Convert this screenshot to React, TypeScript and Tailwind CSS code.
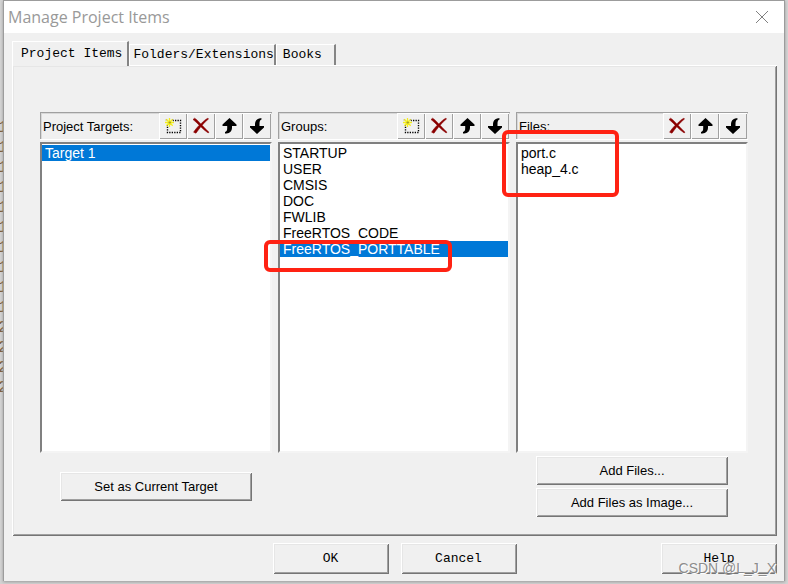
import { useState } from "react";
import type { ReactNode } from "react";
import clsx from "clsx";

const RAISED =
  "bg-[#f0f0f0] shadow-[inset_1px_1px_0_#fff,inset_-1px_-1px_0_#757575,inset_2px_2px_0_#e6e6e6,inset_-2px_-2px_0_#a0a0a0]";

const LINE_NUMBERS = ["1", "1", "1", "1", "1", "1", "1", "1", "1", "1", "2", "2", "2", "2"];

const TABS = [
  { name: "Project Items", pad: "pr-[5px]" },
  { name: "Folders/Extensions", pad: "pl-[3px]" },
  { name: "Books", pad: "pr-3 pl-1.5" },
];

const NewIcon = () => (
  <svg width="18" height="18" viewBox="0 0 18 18" fill="none" aria-hidden="true">
    <rect x="3.5" y="3.5" width="13" height="12" stroke="#000" strokeWidth="1.4" strokeDasharray="1.3 1.2" />
    <path d="M1 1h8v8H1z" fill="#f0f0f0" />
    <path d="M5.5 1v9M1 5.5h9M2.3 2.3l6.4 6.4M8.7 2.3L2.3 8.7" stroke="#f4ee1c" strokeWidth="1.3" />
    <path d="M5 5h1.4v1H5zM1.5 3h1M8 3h1M3 8.5h1" stroke="#8f8b3a" strokeWidth="0.8" />
  </svg>
);

const DeleteIcon = () => (
  <svg width="18" height="18" viewBox="0 0 18 18" aria-hidden="true">
    <path
      d="M1 2.5L2.6 1.2C4.4 2 6.6 4.6 8.8 6.9C11 4.6 13.4 2.4 15.8 1.2L16.6 2C14.6 3.5 12.2 5.9 10.2 8.3C12.3 10.7 14.5 13 17 15.2L16.2 16C13.4 14.2 11 12 8.8 9.8C7.1 12 5.4 14.2 4 16.2L1.6 15.2C2.9 13 5 10.5 7.2 8.2C5.2 6.2 3 4 1 2.5Z"
      fill="#8b0000"
      stroke="#8b0000"
      strokeWidth="0.5"
    />
  </svg>
);

const UpIcon = () => (
  <svg width="18" height="18" viewBox="0 0 18 18" aria-hidden="true">
    <path d="M9.5 1L16.5 7.5V9H12V11C12 14 10 16.2 6.5 16.6H5V15C6.6 14.6 7.2 13.6 7.2 11V9H2.5V7.5Z" fill="#000" />
  </svg>
);

const DownIcon = () => (
  <svg width="18" height="18" viewBox="0 0 18 18" aria-hidden="true">
    <path d="M9 17L16 10.5V9H11.5V7C11.5 4.6 12 3.2 13.5 2.6V1.2H12C8.6 1.6 7 4 7 7V9H2V10.5Z" fill="#000" />
  </svg>
);

const ICONS: Record<string, ReactNode> = {
  New: <NewIcon />,
  Delete: <DeleteIcon />,
  "Move Up": <UpIcon />,
  "Move Down": <DownIcon />,
};

interface ListPaneProps {
  id: string;
  label: string;
  tools: string[];
  items: string[];
  selected?: string[];
  mark?: ReactNode;
  children?: ReactNode;
}

const ListPane = ({ id, label, tools, items, selected = [], mark, children }: ListPaneProps) => {
  const [value, setValue] = useState(selected);

  return (
    <div className="relative flex min-w-0 flex-col">
      <div className="flex h-[27px] items-stretch border-t border-l border-[#a0a0a0] pr-px shadow-[inset_1px_1px_0_#d8d8d8,0_1px_0_#fff]">
        <label htmlFor={id} className="flex flex-1 items-center pt-0.5 pl-0.5">
          {label}
        </label>
        {tools.map((tool) => (
          <button
            key={tool}
            aria-label={`${tool} (${label})`}
            className="flex w-7 items-center justify-center bg-[#f0f0f0] shadow-[inset_1px_1px_0_#fff,inset_-1px_-1px_0_#a0a0a0]"
          >
            {ICONS[tool]}
          </button>
        ))}
      </div>
      <select
        id={id}
        multiple
        value={value}
        onChange={(e) => setValue(Array.from(e.target.selectedOptions, (o) => o.value))}
        className="mt-[3px] h-[311px] w-full appearance-none overflow-hidden border-2 border-t-[#808080] border-r-[#f4f4f4] border-b-[#f4f4f4] border-l-[#808080] bg-white pt-px outline-none"
      >
        {items.map((item) => (
          <option
            key={item}
            value={item}
            className="h-4 min-h-4 px-[3px] py-0 text-sm leading-4 text-black checked:bg-[#0078d7] checked:bg-linear-to-r checked:from-[#0078d7] checked:to-[#0078d7] checked:text-white"
          >
            {item}
          </option>
        ))}
      </select>
      {children}
      {mark}
    </div>
  );
};

const PaneButton = ({ children }: { children: ReactNode }) => (
  <button className={clsx(RAISED, "h-[29px] w-48 self-center")}>{children}</button>
);

const DialogButton = ({ children, className }: { children: ReactNode; className?: string }) => (
  <button className={clsx(RAISED, "h-[31px] w-[116px] font-['Liberation_Mono',monospace]", className)}>
    {children}
  </button>
);

export default function App() {
  const [tab, setTab] = useState("Project Items");

  return (
    <div className="relative flex min-h-screen items-start bg-[#d4d4d4] font-['Liberation_Sans',sans-serif] text-[13px] leading-4 text-black">
      {/* editor gutter peeking out behind the dialog */}
      <div className="w-[3px] shrink-0 overflow-hidden pt-[118px] font-['Liberation_Mono',monospace] text-base leading-5 text-[#7a5a38]">
        {LINE_NUMBERS.map((n, i) => (
          <div key={i} className="-ml-0.5">
            {n}
          </div>
        ))}
      </div>

      <main className="mr-[3px] min-w-0 flex-1 border-x border-t border-[#9c9c9c] bg-[#f0f0f0] shadow-[0_1px_3px_#999]">
        <header className="flex h-8 items-center justify-between bg-white pr-3.5 pl-1">
          <h1 className="font-['Open_Sans',sans-serif] text-base leading-5 text-[#999]">Manage Project Items</h1>
          <button aria-label="Close" className="flex size-4 items-center justify-center">
            <svg width="14" height="14" viewBox="0 0 14 14" fill="none" aria-hidden="true">
              <path d="M1 1L13 13M13 1L1 13" stroke="#808080" />
            </svg>
          </button>
        </header>

        <div className="pt-2 pr-[7px] pb-[7px] pl-2">
          <div role="tablist" className="flex items-end font-['Liberation_Mono',monospace]">
            {TABS.map(({ name, pad }) => (
              <button
                key={name}
                role="tab"
                aria-selected={tab === name}
                onClick={() => setTab(name)}
                className={clsx(
                  "border-t border-r-2 border-l border-t-white border-r-[#858585] border-l-white bg-[#f0f0f0] text-left",
                  pad,
                  tab === name ? "z-10 -mb-px h-[25px] pb-px pl-2" : "h-[21px]",
                )}
              >
                {name}
              </button>
            ))}
          </div>

          <section
            role="tabpanel"
            className={clsx(RAISED, "grid grid-cols-3 items-start gap-x-1.5 pt-[47px] pr-[29px] pb-[19px] pl-7")}
          >
            <ListPane
              id="targets"
              label="Project Targets:"
              tools={["New", "Delete", "Move Up", "Move Down"]}
              items={["Target 1"]}
              selected={["Target 1"]}
            >
              <div className="mt-[19px] flex flex-col">
                <PaneButton>Set as Current Target</PaneButton>
              </div>
            </ListPane>

            <ListPane
              id="groups"
              label="Groups:"
              tools={["New", "Delete", "Move Up", "Move Down"]}
              items={["STARTUP", "USER", "CMSIS", "DOC", "FWLIB", "FreeRTOS_CODE", "FreeRTOS_PORTTABLE"]}
              selected={["FreeRTOS_PORTTABLE"]}
              mark={
                <div className="pointer-events-none absolute top-32 -left-3.5 z-10 h-8 w-[188px] rounded-md border-4 border-[#ff2213]" />
              }
            />

            <ListPane
              id="files"
              label="Files:"
              tools={["Delete", "Move Up", "Move Down"]}
              items={["port.c", "heap_4.c"]}
              mark={
                <div className="pointer-events-none absolute top-[18px] -left-3.5 z-10 h-[67px] w-[117px] rounded-md border-4 border-[#ff2213]" />
              }
            >
              <div className="mt-[3px] flex flex-col gap-[3px]">
                <PaneButton>Add Files...</PaneButton>
                <PaneButton>Add Files as Image...</PaneButton>
              </div>
            </ListPane>
          </section>

          <footer className="mt-[7px] grid grid-cols-[1fr_auto_1fr]">
            <div className="col-start-2 flex gap-3">
              <DialogButton>OK</DialogButton>
              <DialogButton>Cancel</DialogButton>
            </div>
            <DialogButton className="justify-self-end">Help</DialogButton>
          </footer>
        </div>
      </main>

      <span className="pointer-events-none absolute right-3 bottom-2 text-sm leading-4 text-[#8c8c8c] [text-shadow:1px_1px_0_#fff]">
        CSDN @L_J_X
      </span>
    </div>
  );
}
